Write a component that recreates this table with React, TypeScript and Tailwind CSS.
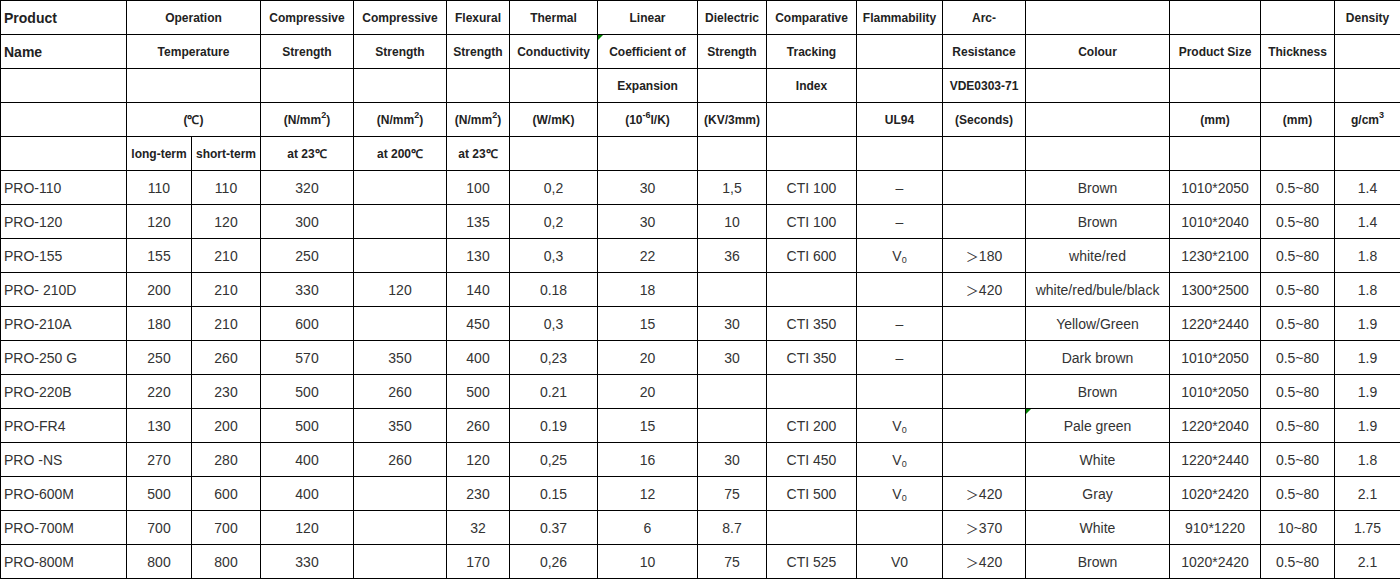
import React from 'react';

const widths = [126, 65, 69, 93, 93, 63, 88, 100, 69, 90, 86, 83, 144, 91, 74, 66];

type Cell = React.ReactNode;

const gt = (n: string) => (
  <span>
    <span className="font-['Noto_Sans_CJK_SC',sans-serif] text-[13px]">＞</span>
    {n}
  </span>
);
const V0 = (
  <span>
    V<sub className="text-[9px]">0</sub>
  </span>
);

const rows: Cell[][] = [
  ['PRO-110', '110', '110', '320', '', '100', '0,2', '30', '1,5', 'CTI 100', '–', '', 'Brown', '1010*2050', '0.5~80', '1.4'],
  ['PRO-120', '120', '120', '300', '', '135', '0,2', '30', '10', 'CTI 100', '–', '', 'Brown', '1010*2040', '0.5~80', '1.4'],
  ['PRO-155', '155', '210', '250', '', '130', '0,3', '22', '36', 'CTI 600', V0, gt('180'), 'white/red', '1230*2100', '0.5~80', '1.8'],
  ['PRO- 210D', '200', '210', '330', '120', '140', '0.18', '18', '', '', '', gt('420'), 'white/red/bule/black', '1300*2500', '0.5~80', '1.8'],
  ['PRO-210A', '180', '210', '600', '', '450', '0,3', '15', '30', 'CTI 350', '–', '', 'Yellow/Green', '1220*2440', '0.5~80', '1.9'],
  ['PRO-250 G', '250', '260', '570', '350', '400', '0,23', '20', '30', 'CTI 350', '–', '', 'Dark brown', '1010*2050', '0.5~80', '1.9'],
  ['PRO-220B', '220', '230', '500', '260', '500', '0.21', '20', '', '', '', '', 'Brown', '1010*2050', '0.5~80', '1.9'],
  ['PRO-FR4', '130', '200', '500', '350', '260', '0.19', '15', '', 'CTI 200', V0, '', 'Pale green', '1220*2040', '0.5~80', '1.9'],
  ['PRO -NS', '270', '280', '400', '260', '120', '0,25', '16', '30', 'CTI 450', V0, '', 'White', '1220*2440', '0.5~80', '1.8'],
  ['PRO-600M', '500', '600', '400', '', '230', '0.15', '12', '75', 'CTI 500', V0, gt('420'), 'Gray', '1020*2420', '0.5~80', '2.1'],
  ['PRO-700M', '700', '700', '120', '', '32', '0.37', '6', '8.7', '', '', gt('370'), 'White', '910*1220', '10~80', '1.75'],
  ['PRO-800M', '800', '800', '330', '', '170', '0,26', '10', '75', 'CTI 525', 'V0', gt('420'), 'Brown', '1020*2420', '0.5~80', '2.1'],
];

const sup = (s: string) => <sup className="text-[9px] -top-[0.7em]">{s}</sup>;

function Corner() {
  return (
    <span className="absolute left-0 top-0 w-0 h-0 border-t-[5px] border-r-[5px] border-t-[#008000] border-r-transparent" />
  );
}

function H({ children, span, left }: { children?: React.ReactNode; span?: number; left?: boolean }) {
  return (
    <td
      colSpan={span}
      className={`border border-black h-[34px] p-0 pt-[1px] font-bold whitespace-nowrap ${left ? 'text-left pl-[3px] text-[14px]' : 'text-center text-[12px]'}`}
    >
      {children}
    </td>
  );
}

export default function App() {
  return (
    <div className="bg-white w-[1400px] h-[579px] overflow-hidden font-['Liberation_Sans',Arial,sans-serif] text-[#222]">
      <table className="table-fixed border-collapse w-[1400px]">
        <colgroup>
          {widths.map((w, i) => (
            <col key={i} style={{ width: w }} />
          ))}
        </colgroup>
        <tbody>
          <tr>
            <H left>Product</H>
            <H span={2}>Operation</H>
            <H>Compressive</H>
            <H>Compressive</H>
            <H>Flexural</H>
            <H>Thermal</H>
            <H>Linear</H>
            <H>Dielectric</H>
            <H>Comparative</H>
            <H>Flammability</H>
            <H>Arc-</H>
            <H />
            <H />
            <H />
            <H>Density</H>
          </tr>
          <tr>
            <H left>Name</H>
            <H span={2}>Temperature</H>
            <H>Strength</H>
            <H>Strength</H>
            <H>Strength</H>
            <H>Conductivity</H>
            <td className="relative border border-black h-[34px] p-0 pt-[1px] font-bold text-[12px] text-center whitespace-nowrap">
              <Corner />
              Coefficient of
            </td>
            <H>Strength</H>
            <H>Tracking</H>
            <H />
            <H>Resistance</H>
            <H>Colour</H>
            <H>Product Size</H>
            <H>Thickness</H>
            <H />
          </tr>
          <tr>
            <H />
            <H span={2} />
            <H />
            <H />
            <H />
            <H />
            <H>Expansion</H>
            <H />
            <H>Index</H>
            <H />
            <H>VDE0303-71</H>
            <H />
            <H />
            <H />
            <H />
          </tr>
          <tr>
            <H />
            <H span={2}>(℃)</H>
            <H>(N/mm{sup('2')})</H>
            <H>(N/mm{sup('2')})</H>
            <H>(N/mm{sup('2')})</H>
            <H>(W/mK)</H>
            <H>(10{sup('-6')}l/K)</H>
            <H>(KV/3mm)</H>
            <H />
            <H>UL94</H>
            <H>(Seconds)</H>
            <H />
            <H>(mm)</H>
            <H>(mm)</H>
            <H>g/cm{sup('3')}</H>
          </tr>
          <tr>
            <H />
            <H>long-term</H>
            <H>short-term</H>
            <H>at 23℃</H>
            <H>at 200℃</H>
            <H>at 23℃</H>
            <H />
            <H />
            <H />
            <H />
            <H />
            <H />
            <H />
            <H />
            <H />
            <H />
          </tr>
          {rows.map((r, ri) => (
            <tr key={ri}>
              {r.map((c, ci) => (
                <td
                  key={ci}
                  className={`border border-black h-[34px] p-0 pt-[2px] text-[14px] text-[#333] whitespace-nowrap ${
                    ci === 0 ? 'text-left pl-[3px]' : 'text-center'
                  } ${ci === 12 && ri === 7 ? 'relative' : ''}`}
                >
                  {ci === 12 && ri === 7 && <Corner />}
                  {c}
                </td>
              ))}
            </tr>
          ))}
        </tbody>
      </table>
    </div>
  );
}
